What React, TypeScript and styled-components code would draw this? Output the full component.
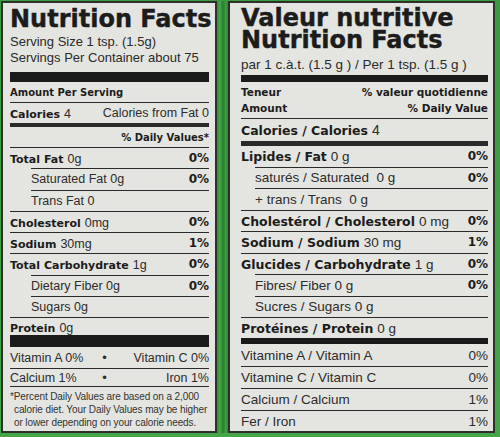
import React from "react";
import styled, { createGlobalStyle } from "styled-components";

const BOLD = `"DejaVu Sans", "Liberation Sans", sans-serif`;
const REG = `"Liberation Sans", Arial, sans-serif`;
const INK = "#1c1c1c";
const LINE = "#2a2a2a";

const GlobalStyle = createGlobalStyle`
  html, body {
    margin: 0;
    padding: 0;
  }
  body {
    width: 500px;
    height: 437px;
    overflow: hidden;
    background: #3f9c42;
  }
`;

const Page = styled.div`
  width: 500px;
  height: 437px;
  box-sizing: border-box;
  display: flex;
  padding: 1px 5px 4px 1px;
  background: linear-gradient(180deg, #3a9a3e 0%, #46a548 100%);
`;

type PanelProps = {
  $width: number;
  $pad: string;
};

const Panel = styled.div<PanelProps>`
  width: ${(p) => p.$width}px;
  flex-shrink: 0;
  box-sizing: border-box;
  border: 2px solid #2e302c;
  background: #e4e5e0;
  padding: ${(p) => p.$pad};
  display: flex;
  flex-direction: column;
  overflow: hidden;
  color: ${INK};
`;

const Divider = styled.div`
  width: 11px;
  flex-shrink: 0;
  background: linear-gradient(
    90deg,
    #2f8a34 0%,
    #45a847 25%,
    #2a7d30 55%,
    #3f9f43 80%,
    #2b8432 100%
  );
`;

const Title = styled.div<{ $lh: number; $top: number }>`
  font-family: ${BOLD};
  font-weight: 700;
  font-size: 24px;
  line-height: ${(p) => p.$lh}px;
  margin-top: ${(p) => p.$top}px;
  -webkit-text-stroke: 0.4px ${INK};
  white-space: nowrap;
`;

const Text = styled.div<{ $size: number; $lh: number; $top?: number }>`
  font-family: ${REG};
  font-size: ${(p) => p.$size}px;
  line-height: ${(p) => p.$lh}px;
  margin-top: ${(p) => p.$top ?? 0}px;
  color: #2a2a2a;
  white-space: nowrap;
`;

const Bar = styled.div<{ $h: number; $top?: number }>`
  height: ${(p) => p.$h}px;
  margin-top: ${(p) => p.$top ?? 0}px;
  background: #1b1b1b;
  flex-shrink: 0;
`;

type RowProps = {
  $h: number;
  $rule?: number;
  $indent?: number;
  $end?: boolean;
};

const Row = styled.div<RowProps>`
  display: flex;
  align-items: center;
  justify-content: ${(p) => (p.$end ? "flex-end" : "space-between")};
  flex-shrink: 0;
  height: ${(p) => p.$h}px;
  border-top: ${(p) => p.$rule ?? 1}px solid ${LINE};
  margin-left: ${(p) => p.$indent ?? 0}px;
  white-space: nowrap;
`;

const HeadRow = styled.div<{ $h: number }>`
  display: flex;
  align-items: center;
  justify-content: space-between;
  height: ${(p) => p.$h}px;
  flex-shrink: 0;
`;

const HeadBlock = styled.div`
  margin-top: 2px;
  padding-bottom: 2px;
  flex-shrink: 0;
`;

const B = styled.span<{ $size: number }>`
  font-family: ${BOLD};
  font-weight: 700;
  font-size: ${(p) => p.$size}px;
  color: ${INK};
`;

const R = styled.span<{ $size: number }>`
  font-family: ${REG};
  font-size: ${(p) => p.$size}px;
  color: #2c2c2c;
  white-space: pre;
`;

const MiniGrid = styled.div<{ $h: number; $rule?: number }>`
  display: grid;
  grid-template-columns: 1fr auto 1fr;
  align-items: center;
  height: ${(p) => p.$h}px;
  border-top: ${(p) => p.$rule ?? 1}px solid ${LINE};
  flex-shrink: 0;
  font-family: ${REG};
  font-size: 12.5px;
  color: #2c2c2c;
  white-space: nowrap;
`;

const Dot = styled.span`
  font-size: 13px;
  padding-right: 10px;
`;

const RightCell = styled.span`
  text-align: right;
`;

const Footnote = styled.div`
  border-top: 1px solid ${LINE};
  padding: 3px 0 0 4px;
  text-indent: -4px;
  font-family: ${REG};
  font-size: 10px;
  line-height: 13px;
  color: #333;
  letter-spacing: -0.1px;
`;

const leftRows = [
  { label: "Total Fat", value: "0g", pct: "0%", indent: 0 },
  { label: "Saturated Fat 0g", value: "", pct: "0%", indent: 21, plain: true },
  { label: "Trans Fat 0", value: "", pct: "", indent: 21, plain: true },
  { label: "Cholesterol", value: "0mg", pct: "0%", indent: 0 },
  { label: "Sodium", value: "30mg", pct: "1%", indent: 0 },
  { label: "Total Carbohydrate", value: "1g", pct: "0%", indent: 0 },
  { label: "Dietary Fiber 0g", value: "", pct: "0%", indent: 21, plain: true },
  { label: "Sugars 0g", value: "", pct: "", indent: 21, plain: true },
];

const rightRows = [
  { label: "Lipides / Fat", value: "0 g", pct: "0%", indent: 0 },
  { label: "saturés / Saturated  0 g", value: "", pct: "0%", indent: 14, plain: true },
  { label: "+ trans / Trans  0 g", value: "", pct: "", indent: 14, plain: true },
  { label: "Cholestérol / Cholesterol", value: "0 mg", pct: "0%", indent: 0 },
  { label: "Sodium / Sodium", value: "30 mg", pct: "1%", indent: 0 },
  { label: "Glucides / Carbohydrate", value: "1 g", pct: "0%", indent: 0 },
  { label: "Fibres/ Fiber 0 g", value: "", pct: "0%", indent: 14, plain: true },
  { label: "Sucres / Sugars 0 g", value: "", pct: "", indent: 14, plain: true },
];

const vitamins = [
  { label: "Vitamine A / Vitamin A", pct: "0%" },
  { label: "Vitamine C / Vitamin C", pct: "0%" },
  { label: "Calcium / Calcium", pct: "1%" },
  { label: "Fer / Iron", pct: "1%" },
];

const UsLabel = () => (
  <Panel $width={216} $pad="0 6px 0 7px">
    <Title $lh={26} $top={3}>
      Nutrition Facts
    </Title>
    <Text $size={13} $lh={16} $top={2}>
      Serving Size 1 tsp. (1.5g)
    </Text>
    <Text $size={13} $lh={16}>
      Servings Per Container about 75
    </Text>
    <Bar $h={10} $top={6} />
    <HeadRow $h={20}>
      <B $size={10}>Amount Per Serving</B>
    </HeadRow>
    <Row $h={20}>
      <span>
        <B $size={11}>Calories</B> <R $size={12.5}>4</R>
      </span>
      <R $size={12.5}>Calories from Fat 0</R>
    </Row>
    <Row $h={20} $rule={4} $end>
      <B $size={10}>% Daily Values*</B>
    </Row>
    {leftRows.map((r) => (
      <Row key={r.label} $h={20.25} $indent={r.indent}>
        {r.plain ? (
          <R $size={12.5}>{r.label}</R>
        ) : (
          <span>
            <B $size={11}>{r.label}</B> <R $size={12.5}>{r.value}</R>
          </span>
        )}
        <B $size={12}>{r.pct}</B>
      </Row>
    ))}
    <Row $h={17}>
      <span>
        <B $size={11}>Protein</B> <R $size={12.5}>0g</R>
      </span>
    </Row>
    <Bar $h={12} />
    <MiniGrid $h={21} $rule={0}>
      <span>Vitamin A 0%</span>
      <Dot>•</Dot>
      <RightCell>Vitamin C 0%</RightCell>
    </MiniGrid>
    <MiniGrid $h={17}>
      <span>Calcium 1%</span>
      <Dot>•</Dot>
      <RightCell>Iron 1%</RightCell>
    </MiniGrid>
    <Footnote>
      *Percent Daily Values are based on a 2,000 calorie diet. Your Daily
      Values may be higher or lower depending on your calorie needs.
    </Footnote>
  </Panel>
);

const CanadaLabel = () => (
  <Panel $width={267} $pad="0 5px 0 11px">
    <Title $lh={22} $top={4}>
      Valeur nutritive
    </Title>
    <Title $lh={22} $top={0}>
      Nutrition Facts
    </Title>
    <Text $size={13.5} $lh={16} $top={6}>
      par 1 c.à.t. (1.5 g ) / Per 1 tsp. (1.5 g )
    </Text>
    <Bar $h={7} $top={2} />
    <HeadBlock>
      <HeadRow $h={16}>
        <B $size={10.5}>Teneur</B>
        <B $size={10.5}>% valeur quotidienne</B>
      </HeadRow>
      <HeadRow $h={16}>
        <B $size={10.5}>Amount</B>
        <B $size={10.5}>% Daily Value</B>
      </HeadRow>
    </HeadBlock>
    <Row $h={22}>
      <span>
        <B $size={12.5}>Calories / Calories</B> <R $size={14}>4</R>
      </span>
    </Row>
    {rightRows.map((r, i) => (
      <Row key={r.label} $h={20.5} $rule={i === 0 ? 5 : 1} $indent={r.indent}>
        {r.plain ? (
          <R $size={13.5}>{r.label}</R>
        ) : (
          <span>
            <B $size={12.5}>{r.label}</B> <R $size={13.5}>{r.value}</R>
          </span>
        )}
        <B $size={12}>{r.pct}</B>
      </Row>
    ))}
    <Row $h={20}>
      <span>
        <B $size={12.5}>Protéines / Protein</B> <R $size={13.5}>0 g</R>
      </span>
    </Row>
    <Bar $h={6} />
    {vitamins.map((v, i) => (
      <Row key={v.label} $h={i === 0 ? 22 : 21} $rule={i === 0 ? 0 : 1}>
        <R $size={13.5}>{v.label}</R>
        <R $size={13.5}>{v.pct}</R>
      </Row>
    ))}
  </Panel>
);

const App = () => (
  <>
    <GlobalStyle />
    <Page>
      <UsLabel />
      <Divider />
      <CanadaLabel />
    </Page>
  </>
);

export default App;
